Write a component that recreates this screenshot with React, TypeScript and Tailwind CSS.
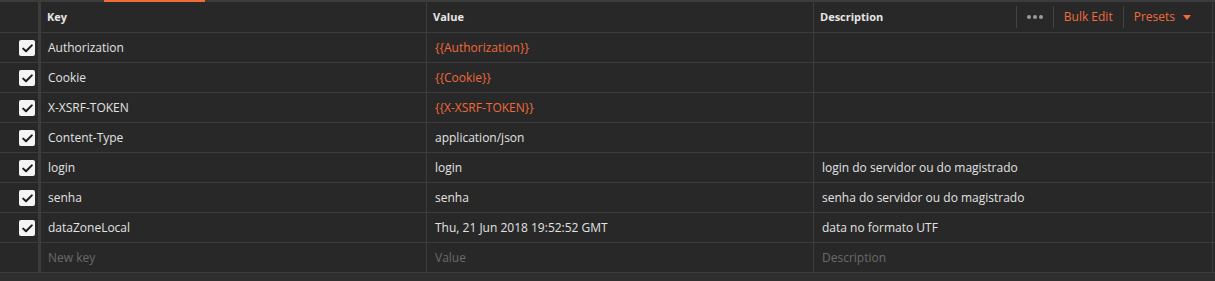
const rows = [
  { key: "Authorization", value: "{{Authorization}}", desc: "", variable: true },
  { key: "Cookie", value: "{{Cookie}}", desc: "", variable: true },
  { key: "X-XSRF-TOKEN", value: "{{X-XSRF-TOKEN}}", desc: "", variable: true },
  { key: "Content-Type", value: "application/json", desc: "" },
  { key: "login", value: "login", desc: "login do servidor ou do magistrado" },
  { key: "senha", value: "senha", desc: "senha do servidor ou do magistrado" },
  { key: "dataZoneLocal", value: "Thu, 21 Jun 2018 19:52:52 GMT", desc: "data no formato UTF" },
];

function Check() {
  return (
    <span className="flex h-4 w-4 items-center justify-center rounded-[2px] bg-[#f4f4f4]">
      <svg width="11" height="9" viewBox="0 0 11 9" fill="none">
        <path d="M1.2 4.6 L4 7.3 L9.8 1.4" stroke="#1c1c1c" strokeWidth="2" strokeLinecap="round" strokeLinejoin="round" />
      </svg>
    </span>
  );
}

function Row({ children, check }: { children: React.ReactNode; check?: boolean }) {
  return (
    <div className="flex h-[30px] border-b border-[#3c3c3c]">
      <div className="flex w-[41px] shrink-0 items-center justify-end border-r-[3px] border-[#3c3c3c] pr-[3px] pt-[1px]">
        {check && <Check />}
      </div>
      {children}
    </div>
  );
}

export default function App() {
  return (
    <div
      className="h-[281px] w-[1215px] overflow-hidden bg-[#2f2f2f] text-[12px] text-[#e2e2e2]"
      style={{ fontFamily: '"Open Sans", "Noto Sans", sans-serif' }}
    >
      <div className="bg-[#282828]">
        {/* active tab indicator */}
        <div className="flex h-[2px] bg-[#3c3c3c]">
          <div className="ml-[104px] w-[101px] bg-[#f26b3a]" />
        </div>

        {/* header */}
        <div className="flex h-[31px] border-b border-[#3c3c3c] text-[11px] font-bold text-[#e6e6e6]">
          <div className="w-[41px] shrink-0 border-r-[3px] border-[#3c3c3c]" />
          <div className="flex w-[386px] shrink-0 items-center border-r border-[#3c3c3c] pl-[6px]">Key</div>
          <div className="flex w-[387px] shrink-0 items-center border-r border-[#3c3c3c] pl-[6px]">Value</div>
          <div className="flex w-[399px] shrink-0 items-center border-r border-[#3c3c3c] pl-[6px]">
            <span>Description</span>
            <div className="ml-auto flex items-center pr-[21px] text-[12px] font-normal">
              <span className="h-[22px] w-px bg-[#444]" />
              <span className="flex w-[36px] items-center justify-center gap-[2px]">
                <span className="h-[4px] w-[4px] rounded-full bg-[#9a9a9a]" />
                <span className="h-[4px] w-[4px] rounded-full bg-[#9a9a9a]" />
                <span className="h-[4px] w-[4px] rounded-full bg-[#9a9a9a]" />
              </span>
              <span className="h-[22px] w-px bg-[#444]" />
              <span className="px-[10px] text-[#f26b3a]">Bulk Edit</span>
              <span className="h-[22px] w-px bg-[#444]" />
              <span className="pl-[10px] text-[#f26b3a]">Presets</span>
              <svg className="ml-[8px]" width="8" height="5" viewBox="0 0 8 5">
                <path d="M0 0 H8 L4 5 Z" fill="#f26b3a" />
              </svg>
            </div>
          </div>
        </div>

        {rows.map((r) => (
          <Row key={r.key} check>
            <div className="flex w-[386px] shrink-0 items-center border-r border-[#3c3c3c] pl-[7px] pt-[1px]">{r.key}</div>
            <div
              className={`flex w-[387px] shrink-0 items-center border-r border-[#3c3c3c] pl-[8px] pt-[1px] ${
                r.variable ? "text-[#f0683a]" : ""
              }`}
            >
              {r.value}
            </div>
            <div className="flex w-[399px] shrink-0 items-center border-r border-[#3c3c3c] pl-[8px] pt-[1px]">{r.desc}</div>
          </Row>
        ))}

        <Row>
          <div className="flex w-[386px] shrink-0 items-center border-r border-[#3c3c3c] pl-[7px] pt-[1px] text-[#6a6a6a]">New key</div>
          <div className="flex w-[387px] shrink-0 items-center border-r border-[#3c3c3c] pl-[8px] pt-[1px] text-[#6a6a6a]">Value</div>
          <div className="flex w-[399px] shrink-0 items-center border-r border-[#3c3c3c] pl-[8px] pt-[1px] text-[#6a6a6a]">Description</div>
        </Row>
      </div>
    </div>
  );
}
